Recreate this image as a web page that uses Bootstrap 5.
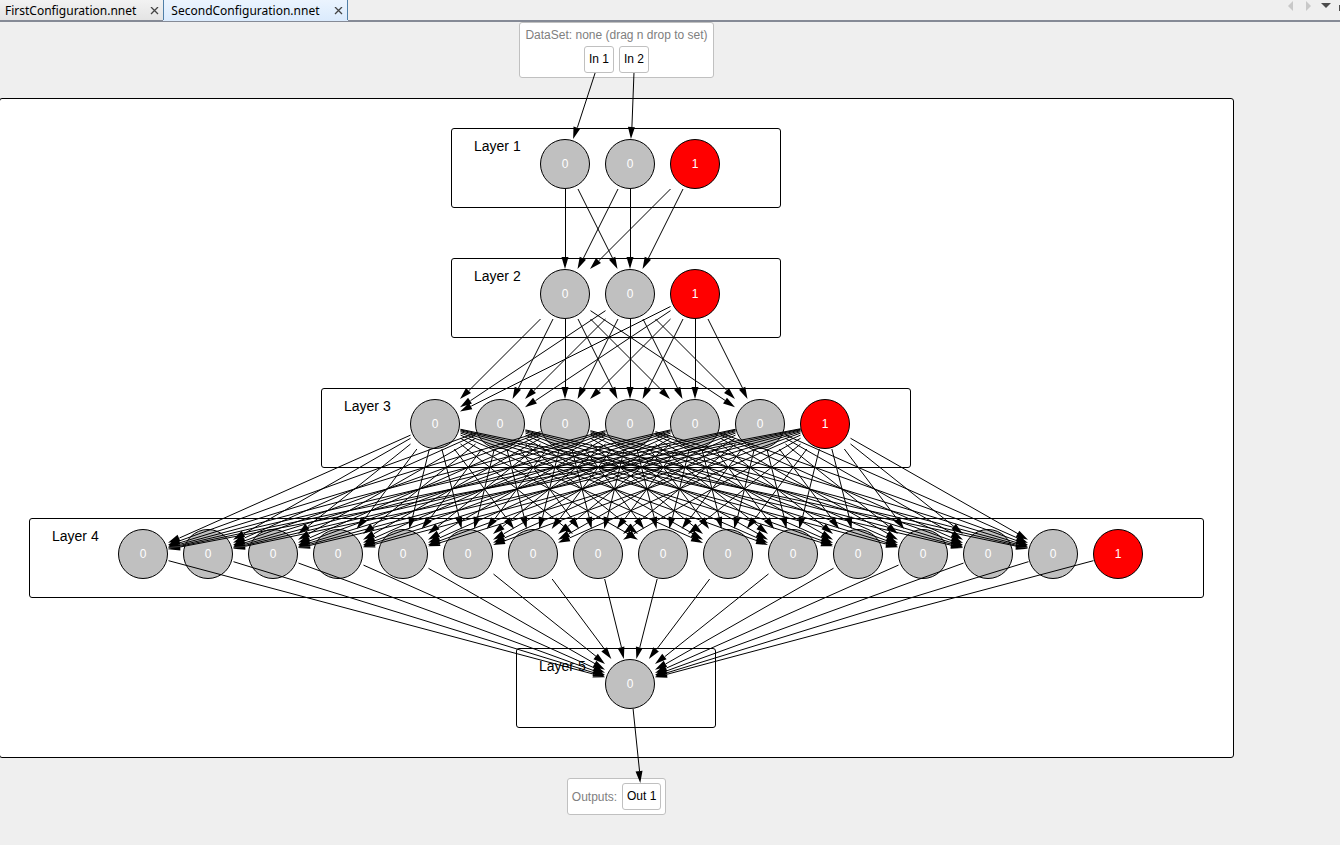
<!DOCTYPE html>
<html lang="en">
<head>
<meta charset="utf-8">
<meta name="viewport" content="width=device-width, initial-scale=1">
<title>SecondConfiguration.nnet</title>
<link href="https://cdn.jsdelivr.net/npm/bootstrap@5.3.0/dist/css/bootstrap.min.css" rel="stylesheet">
<style>
  body { background: #efefef; color: #000; font: 12px/16px "Liberation Sans", Arial, sans-serif; }
  .doc-tabs { height: 22px; border-bottom: 2px solid #858a96; font: 12px/18px "Noto Sans", Tahoma, sans-serif; }
  .doc-tab { height: 20px; gap: 14px; padding: 2px 4px 0 5px; background: linear-gradient(#f2f2f2, #e4e4e4); }
  .doc-tab.active { padding-left: 7px; background: linear-gradient(#ebf4fe, #dbebfd); border: solid #4f7fa8; border-width: 0 1px; box-shadow: 0 1px #dbebfd; }
  .doc-tab a { color: #000; text-decoration: none; }
  .plain-btn { border: 0; padding: 0; background: none; line-height: 0; }
  .scene { gap: 20px; }
  .port-panel { background: #fff; border: 1px solid #c0c0c0; border-radius: 3px; color: #808080; padding: 4px; margin-right: 1px; }
  .port-panel.inputs { min-width: 195px; gap: 3px; }
  .port-row { gap: 5px; }
  .port { min-width: 30px; border: 1px solid #c0c0c0; border-radius: 3px; color: #000; padding: 5px 3px; line-height: 15px; white-space: nowrap; text-align: center; }
  .port-out { min-width: 39px; }
  .network { background: #fff; border: 1px solid #000; border-radius: 3px; padding: 29px; gap: 50px; margin-left: -1px; }
  .layer { border: 1px solid #000; border-radius: 3px; padding: 10px 60px 18px 22px; }
  /* Keeps the narrower layers on whole pixels inside the odd-width column. */
  .layer:not(.widest) { margin-right: 1px; }
  .layer-name { width: 66px; font-size: 14px; line-height: 14px; white-space: nowrap; }
  .neurons { gap: 15px; }
  .neuron { width: 50px; height: 50px; border: 1px solid #000; border-radius: 50%; background: #c0c0c0; color: #fff; }
  .neuron.bias { background: #f00; }
  .links { pointer-events: none; overflow: visible; }
</style>
</head>
<body>
<header class="doc-tabs d-flex justify-content-between">
  <nav class="d-flex" aria-label="Open documents">
    <div class="doc-tab d-flex align-items-center">
      <a href="#first">FirstConfiguration.nnet</a>
      <button class="plain-btn" aria-label="Close FirstConfiguration.nnet"><svg width="9" height="9" viewBox="0 0 9 9" stroke="#444" stroke-width="1.3"><path d="M1 0l7 7M8 0l-7 7"/></svg></button>
    </div>
    <div class="doc-tab active d-flex align-items-center">
      <a href="#second">SecondConfiguration.nnet</a>
      <button class="plain-btn" aria-label="Close SecondConfiguration.nnet"><svg width="9" height="9" viewBox="0 0 9 9" stroke="#444" stroke-width="1.3"><path d="M1 0l7 7M8 0l-7 7"/></svg></button>
    </div>
  </nav>
  <div class="d-flex align-items-start overflow-hidden">
    <button class="plain-btn" aria-label="Previous tab"><svg width="18" height="14"><path d="M11 1v10L6 6z" fill="#c8c8c8"/></svg></button>
    <button class="plain-btn" aria-label="Next tab"><svg width="18" height="14"><path d="M6 1v10l5-5z" fill="#c8c8c8"/></svg></button>
    <button class="plain-btn" aria-label="List tabs"><svg width="18" height="14"><path d="M3 3h10L8 8z" fill="#4c4c4c"/></svg></button>
    <button class="plain-btn" aria-label="Maximize"><svg width="4" height="14"><path d="M3 5h1v6H3z" fill="#4c4c4c"/></svg></button>
  </div>
</header>

<main id="scene" class="scene position-relative d-inline-flex flex-column align-items-center">
  <section class="port-panel inputs d-flex flex-column align-items-center">
    <div class="text-nowrap">DataSet: none (drag n drop to set)</div>
    <div class="port-row d-flex">
      <div class="port" data-port="in">In 1</div>
      <div class="port" data-port="in">In 2</div>
    </div>
  </section>
  <section id="network" class="network d-flex flex-column align-items-center"></section>
  <section class="port-panel port-row d-flex align-items-center">
    <span>Outputs:</span>
    <div class="port port-out" data-port="out">Out 1</div>
  </section>
  <svg id="links" class="links position-absolute top-0 start-0 w-100 h-100" aria-hidden="true"></svg>
</main>

<script src="https://cdn.jsdelivr.net/npm/bootstrap@5.3.0/dist/js/bootstrap.bundle.min.js"></script>
<script>
  // Each layer: number of regular neurons and whether a bias neuron follows them.
  const layers = [[2, true], [2, true], [6, true], [15, true], [1, false]];
  const most = Math.max(...layers.map(([count]) => count));
  const network = document.getElementById('network');
  layers.forEach(([count, bias], i) => {
    const cell = (cls, v) => `<div class="neuron ${cls} d-flex align-items-center justify-content-center">${v}</div>`;
    network.insertAdjacentHTML('beforeend',
      `<div class="layer ${count === most ? 'widest' : ''} d-flex"><div class="layer-name">Layer ${i + 1}</div>
       <div class="neurons d-flex">${cell('', 0).repeat(count)}${bias ? cell('bias', 1) : ''}</div></div>`);
  });

  const links = document.getElementById('links');
  // Distance along (dx, dy) at which a ray from a box's centre leaves the box.
  const reach = (b, dx, dy) => Math.min(b.width / 2 / Math.abs(dx || 1e-9), b.height / 2 / Math.abs(dy || 1e-9));
  function drawLinks() {
    const origin = links.getBoundingClientRect();
    let shafts = '', heads = '';
    const connect = (from, to) => {
      const a = from.getBoundingClientRect(), b = to.getBoundingClientRect();
      const ax = a.x + a.width / 2 - origin.x, ay = a.y + a.height / 2 - origin.y;
      const bx = b.x + b.width / 2 - origin.x, by = b.y + b.height / 2 - origin.y;
      const dx = bx - ax, dy = by - ay, len = Math.hypot(dx, dy), ux = dx / len, uy = dy / len;
      const s = reach(a, dx, dy), e = reach(b, dx, dy);
      const x1 = ax + dx * s, y1 = ay + dy * s, x2 = bx - dx * e, y2 = by - dy * e;
      const hx = x2 - ux * 12, hy = y2 - uy * 12;
      shafts += `M${x1 + .5} ${y1}L${hx + .5} ${hy}`;
      heads += `M${x2} ${y2}L${hx - uy * 3.5} ${hy + ux * 3.5}L${hx + uy * 3.5} ${hy - ux * 3.5}Z`;
    };
    const rows = [...document.querySelectorAll('.layer')].map(l => [...l.querySelectorAll('.neuron')]);
    document.querySelectorAll('[data-port=in]').forEach((p, i) => connect(p, rows[0][i]));
    for (let i = 0; i + 1 < rows.length; i++)
      for (const from of rows[i])
        for (const to of rows[i + 1]) if (!to.classList.contains('bias')) connect(from, to);
    connect(rows[rows.length - 1][0], document.querySelector('[data-port=out]'));
    links.innerHTML = `<path d="${shafts}" fill="none" stroke="#000"/><path d="${heads}"/>`;
  }
  drawLinks();
  addEventListener('resize', drawLinks);
</script>
</body>
</html>
